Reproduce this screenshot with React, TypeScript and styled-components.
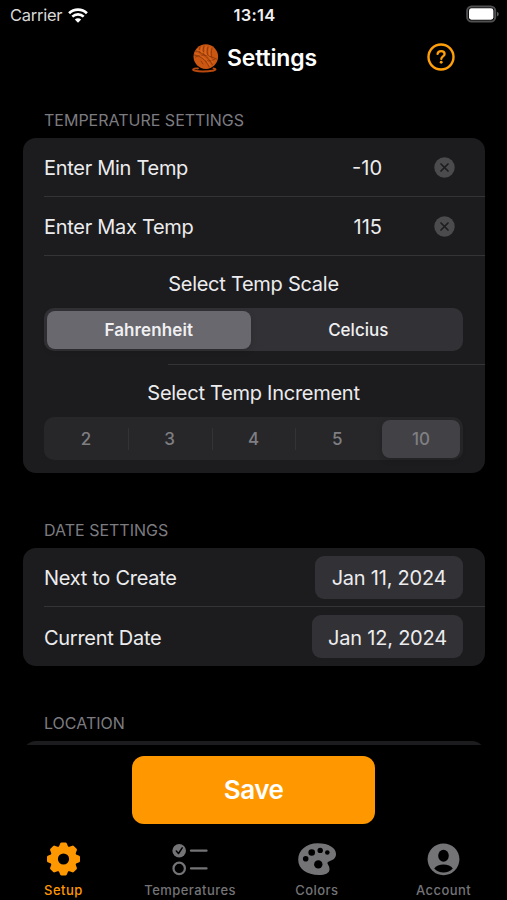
import React from 'react';
import styled, { createGlobalStyle } from 'styled-components';

const Global = createGlobalStyle`
  * { box-sizing: border-box; }
  html, body { margin: 0; background: #000; }
  body { font-family: Inter, "Liberation Sans", sans-serif; color: #ececee; -webkit-font-smoothing: antialiased; }
  svg { display: block; }
`;

const Screen = styled.div`
  width: 507px;
  height: 900px;
  background: #000;
  display: flex;
  flex-direction: column;
  overflow: hidden;
`;

const StatusBar = styled.header`
  display: grid;
  grid-template-columns: 1fr auto 1fr;
  align-items: center;
  height: 30px;
  flex: none;
  padding: 0 7px 0 10px;
`;

const Carrier = styled.div`
  display: flex;
  align-items: center;
  gap: 6px;
  font-size: 16.5px;
  letter-spacing: -0.25px;
  color: #d8d8d8;
`;

const Clock = styled.div`
  margin-right: 1px;
  font-size: 16.5px;
  font-weight: 600;
  letter-spacing: 0.3px;
  color: #f0f0f0;
`;

const BatterySlot = styled.div`
  justify-self: end;
  margin-top: -2px;
`;

const TitleBar = styled.div`
  display: grid;
  grid-template-columns: 1fr auto 1fr;
  align-items: center;
  height: 55px;
  flex: none;
  padding: 0 52px 0 53px;
`;

const Title = styled.h1`
  grid-column: 2;
  display: flex;
  align-items: center;
  gap: 8px;
  margin: 0;
  font-size: 23px;
  line-height: 30px;
  font-weight: 600;
  letter-spacing: -0.15px;
  color: #fff;
`;

const HelpButton = styled.button`
  justify-self: end;
  margin-top: -2px;
  padding: 0;
  border: 0;
  background: none;
`;

const Content = styled.main`
  height: 660px;
  flex: none;
  overflow: hidden;
  padding: 23px 22px 0 23px;
`;

const SectionLabel = styled.h2<{ $gap?: number }>`
  margin: ${p => p.$gap ?? 0}px 0 0;
  padding-left: 21px;
  height: 30px;
  line-height: 24px;
  font-size: 16px;
  font-weight: 400;
  color: #7c7c80;
`;

const Card = styled.section<{ $height: number }>`
  height: ${p => p.$height}px;
  border-radius: 13px;
  background: #1c1c1e;
  overflow: hidden;
`;

const Row = styled.div<{ $last?: boolean }>`
  display: flex;
  align-items: center;
  height: 59px;
  margin-left: 21px;
  padding-right: 22px;
  border-bottom: ${p => (p.$last ? 0 : 1)}px solid #343436;
`;

const RowLabel = styled.span`
  flex: 1;
  padding-top: 2px;
  font-size: 20px;
  letter-spacing: -0.29px;
`;

const NumberValue = styled.span`
  width: 90px;
  padding-top: 2px;
  margin-right: 52px;
  text-align: right;
  font-size: 20px;
`;

const ClearButton = styled.button`
  padding: 0;
  margin-right: 8px;
  border: 0;
  background: none;
`;

const Picker = styled.div<{ $height: number }>`
  height: ${p => p.$height}px;
  padding: 0 22px 0 21px;
`;

const PickerTitle = styled.div`
  height: 52px;
  line-height: 56px;
  text-align: center;
  font-size: 20px;
  letter-spacing: -0.27px;
`;

const PickerDivider = styled.div`
  height: 1px;
  margin-left: 145px;
  background: #343436;
`;

const Segments = styled.div<{ $dim?: boolean }>`
  display: flex;
  height: 43px;
  border-radius: 10px;
  background: ${p => (p.$dim ? '#272729' : '#323236')};
`;

const SegmentCell = styled.div<{ $rule?: boolean }>`
  flex: 1;
  padding: 2.5px 3px;
  background: ${p => (p.$rule ? 'linear-gradient(#333336, #333336) left center / 1px 22px no-repeat' : 'none')};
`;

const Segment = styled.div<{ $active?: boolean; $dim?: boolean }>`
  display: flex;
  align-items: center;
  justify-content: center;
  height: 38px;
  border-radius: 8px;
  font-size: 17px;
  letter-spacing: ${p => (p.$active && !p.$dim ? 0.1 : 0)}px;
  font-weight: ${p => (p.$active && !p.$dim ? 600 : 500)};
  color: ${p => (p.$dim ? '#7f7f83' : '#f0f0f2')};
  background: ${p => (p.$active ? (p.$dim ? '#424246' : '#68686e') : 'transparent')};
  box-shadow: ${p => (p.$active ? '0 2px 6px rgba(0, 0, 0, 0.14)' : 'none')};
`;

const DateChip = styled.button<{ $width: number }>`
  width: ${p => p.$width}px;
  height: 43px;
  padding: 2px 0 0;
  border: 0;
  border-radius: 9px;
  background: #323236;
  color: #ececee;
  font: 400 20px Inter, "Liberation Sans", sans-serif;
  letter-spacing: -0.22px;
`;

const SaveArea = styled.div`
  display: flex;
  justify-content: center;
  height: 90px;
  flex: none;
  padding-top: 11px;
`;

const SaveButton = styled.button`
  width: 243px;
  height: 68px;
  padding: 0 0 1px;
  border: 0;
  border-radius: 12px;
  background: #ff9800;
  color: #fff;
  font: 600 26px Inter, "Liberation Sans", sans-serif;
  letter-spacing: -0.5px;
`;

const TabBar = styled.nav`
  display: grid;
  grid-template-columns: repeat(4, 1fr);
  height: 65px;
  flex: none;
  padding-top: 7px;
`;

const Tab = styled.div<{ $active?: boolean }>`
  display: flex;
  flex-direction: column;
  align-items: center;
  gap: 4px;
  color: ${p => (p.$active ? '#ff9800' : '#747477')};
  font-size: 13px;
  line-height: 20px;
  font-weight: 500;
  letter-spacing: 0.45px;
`;

const Wifi = () => (
  <svg width="20" height="15" viewBox="0 0 20 15" fill="none" stroke="#fff">
    <path d="M1.1 5.2C6 .4 14 .4 18.9 5.2" strokeWidth="2.7" />
    <path d="M4.3 8.6c3.2-3 8.2-3 11.4 0" strokeWidth="2.6" />
    <path d="M10 14.7 6.8 11.4c1.8-1.7 4.6-1.7 6.4 0z" fill="#fff" stroke="none" />
  </svg>
);

const Battery = () => (
  <svg width="34" height="18" viewBox="0 0 34 18">
    <rect x="1.2" y="1.4" width="28" height="15.2" rx="4.4" fill="none" stroke="#505052" strokeWidth="2" />
    <rect x="3" y="3.3" width="24.4" height="11.4" rx="2.4" fill="#fff" />
    <path d="M31 6.8q1.800.700 1.800 2.300t-1.800 2.300z" fill="#5a5a5c" />
  </svg>
);

const Yarn = () => (
  <svg width="28" height="30" viewBox="0 0 28 30" fill="none" strokeLinecap="round">
    <circle cx="14.8" cy="13.600" r="12.300" fill="#cb5612" />
    <g stroke="#8a380b" strokeWidth=".9">
      <path d="M4.500 8c6 1 12 5 17 14M3.200 12c6 1 11 4 15 12" />
      <path d="M9 4c-1 2-1 4 0 6M13 3c-1 3-1 6 0 8M17 4c-1 3-1 6 0 9M21 5c-1 4-1 7 0 10" />
      <path d="M4.500 14c7-4 14-1 21 2M10 18l2 3M15 18c3 0 6 0 9-2" />
    </g>
    <g stroke="#e06c20" strokeWidth=".8">
      <path d="M6 6.500c6 2 12 6 16 13M5 10.500c6 2 11 6 14 12M11 4c-1 2-1 4 0 6M15 3.500c-1 3-1 6 0 8M19 4.500c-1 3-1 6 0 8" />
    </g>
    <path d="M7 25.500c-5-.4-6.200 1.500-3.500 2.200 5 1.100 13.500.8 19.500-.2 2.300-.7 2-1.900-.5-2.100" stroke="#b9490d" strokeWidth="1.800" />
  </svg>
);

const Help = () => (
  <svg width="28" height="28" viewBox="0 0 28 28" fill="none" stroke="#ff9f0a" strokeLinecap="round" strokeLinejoin="round">
    <circle cx="14" cy="14" r="12.500" strokeWidth="2.400" />
    <path d="M10.600 10.900c.3-1.900 1.600-2.700 3.500-2.700 2.100 0 3.500 1.100 3.500 2.800 0 2.300-3.300 2.500-3.300 4.900" strokeWidth="2.300" />
    <circle cx="14.200" cy="19.300" r="1.450" fill="#ff9f0a" stroke="none" />
  </svg>
);

const Clear = () => (
  <svg width="21" height="21" viewBox="0 0 21 21">
    <circle cx="10.500" cy="10.500" r="10.200" fill="#4b4b4e" />
    <path d="m7 7 7 7m0-7-7 7" stroke="#1d1d1f" strokeWidth="1.700" strokeLinecap="round" />
  </svg>
);

const Gear = () => (
  <svg width="34" height="34" viewBox="-17.500 -17 34 34" fill="currentColor">
    <circle r="9.400" fill="none" stroke="currentColor" strokeWidth="7.600" />
    {[0, 45, 90, 135, 180, 225, 270, 315].map(a => (
      <path key={a} transform={`rotate(${a})`} d="M-3.600-11.500-2-15.200h4L3.600-11.500z" stroke="currentColor" strokeWidth="2.600" strokeLinejoin="round" />
    ))}
  </svg>
);

const Checklist = () => (
  <svg width="36" height="34" viewBox="0 0 36 34" fill="none" stroke="currentColor" strokeLinecap="round">
    <circle cx="7.200" cy="8.700" r="6.800" fill="currentColor" stroke="none" />
    <path d="m4.300 9 2.200 2.500 3.700-5.600" stroke="#000" strokeWidth="1.500" strokeLinejoin="round" />
    <circle cx="7.200" cy="26.400" r="5.700" strokeWidth="2.200" />
    <path d="M19 8.700h15.500M19 26.400h15.500" strokeWidth="2.300" />
  </svg>
);

const Palette = () => (
  <svg width="38" height="34" viewBox="0 0 38 34">
    <path fill="currentColor" d="M19.500 1.200C31 1.200 38 6 38 12c0 4-3 6-6 7-2.600.8-3.300 1.700-2 3.600 1 1.500 1.500 3 1.500 4.800 0 3.600-4.500 5.600-10.500 5.600C8.500 33 .2 26.800.2 17.800.2 8 8.500 1.200 19.500 1.200z" />
    <g fill="#000">
      <circle cx="7.700" cy="16.700" r="2.800" />
      <circle cx="13.700" cy="10.500" r="3.300" />
      <circle cx="22.200" cy="8.400" r="2.700" />
      <circle cx="29.300" cy="10.500" r="2.300" />
      <circle cx="20.300" cy="22.400" r="4.200" />
    </g>
  </svg>
);

const Account = () => (
  <svg width="34" height="34" viewBox="0.500 0 34 34">
    <circle cx="17" cy="17.300" r="15.900" fill="currentColor" />
    <ellipse cx="17" cy="13.800" rx="5.300" ry="6" />
    <path d="M7.700 26.500c1.700-2.700 5.300-4 9.300-4s7.600 1.300 9.300 4c-2.400 2.600-5.600 4-9.300 4s-6.900-1.400-9.300-4z" />
  </svg>
);

const tabs = [
  { label: 'Setup', Icon: Gear, active: true },
  { label: 'Temperatures', Icon: Checklist },
  { label: 'Colors', Icon: Palette },
  { label: 'Account', Icon: Account },
];

const increments = ['2', '3', '4', '5', '10'];

export default function App() {
  return (
    <Screen>
      <Global />
      <StatusBar>
        <Carrier>Carrier <Wifi /></Carrier>
        <Clock>13:14</Clock>
        <BatterySlot><Battery /></BatterySlot>
      </StatusBar>
      <TitleBar>
        <Title><Yarn />Settings</Title>
        <HelpButton aria-label="Help"><Help /></HelpButton>
      </TitleBar>
      <Content>
        <SectionLabel>TEMPERATURE SETTINGS</SectionLabel>
        <Card $height={335}>
          <Row>
            <RowLabel>Enter Min Temp</RowLabel>
            <NumberValue>-10</NumberValue>
            <ClearButton aria-label="Clear minimum"><Clear /></ClearButton>
          </Row>
          <Row>
            <RowLabel>Enter Max Temp</RowLabel>
            <NumberValue>115</NumberValue>
            <ClearButton aria-label="Clear maximum"><Clear /></ClearButton>
          </Row>
          <Picker $height={108}>
            <PickerTitle>Select Temp Scale</PickerTitle>
            <Segments>
              <SegmentCell><Segment $active>Fahrenheit</Segment></SegmentCell>
              <SegmentCell><Segment>Celcius</Segment></SegmentCell>
            </Segments>
          </Picker>
          <PickerDivider />
          <Picker $height={108}>
            <PickerTitle>Select Temp Increment</PickerTitle>
            <Segments $dim>
              {increments.map((n, i) => (
                <SegmentCell key={n} $rule={i > 0 && n !== '10'}>
                  <Segment $dim $active={n === '10'}>{n}</Segment>
                </SegmentCell>
              ))}
            </Segments>
          </Picker>
        </Card>
        <SectionLabel $gap={45}>DATE SETTINGS</SectionLabel>
        <Card $height={118}>
          <Row>
            <RowLabel>Next to Create</RowLabel>
            <DateChip $width={148}>Jan 11, 2024</DateChip>
          </Row>
          <Row $last>
            <RowLabel>Current Date</RowLabel>
            <DateChip $width={151}>Jan 12, 2024</DateChip>
          </Row>
        </Card>
        <SectionLabel $gap={45}>LOCATION</SectionLabel>
        <Card $height={60} />
      </Content>
      <SaveArea><SaveButton>Save</SaveButton></SaveArea>
      <TabBar>
        {tabs.map(({ label, Icon, active }) => (
          <Tab key={label} $active={active}><Icon />{label}</Tab>
        ))}
      </TabBar>
    </Screen>
  );
}
